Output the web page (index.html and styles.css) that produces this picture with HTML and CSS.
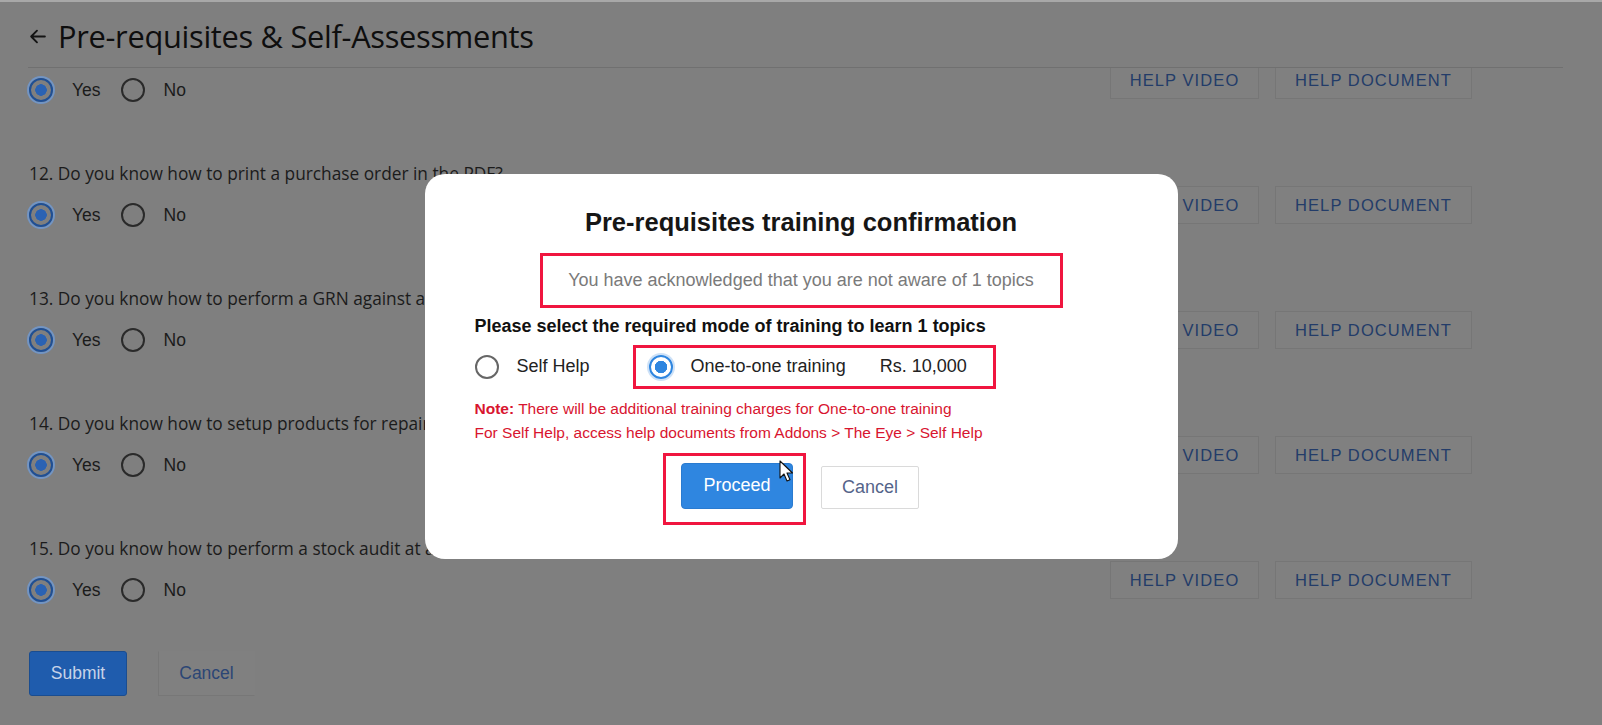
FILE: index.html
```html
<!DOCTYPE html>
<html lang="en">
<head>
  <meta charset="UTF-8">
  <meta name="viewport" content="width=device-width, initial-scale=1.0">
  <title>Pre-requisites &amp; Self-Assessments</title>
  <link rel="stylesheet" href="styles.css">
</head>
<body>
  <div class="page">
    <header class="page-head">
      <svg class="back-icon" viewBox="0 0 18 18" width="19" height="19" aria-hidden="true">
        <path d="M16 9H3M8.5 3.5L3 9l5.5 5.5" fill="none" stroke="#141414" stroke-width="1.8" stroke-linecap="round" stroke-linejoin="round"/>
      </svg>
      <h1>Pre-requisites &amp; Self-Assessments</h1>
    </header>

    <div class="questions">
      <div class="question-list">
        <!-- question 11 is scrolled under the header, only its answers show -->
        <div class="question cut">
          <div class="question-main">
            <div class="choices">
              <label class="choice"><span class="radio on"></span>Yes</label>
              <label class="choice"><span class="radio"></span>No</label>
            </div>
          </div>
          <div class="help-links">
            <span class="help-btn video">HELP VIDEO</span>
            <span class="help-btn doc">HELP DOCUMENT</span>
          </div>
        </div>

        <div class="question">
          <div class="question-main">
            <p class="question-text">12. Do you know how to print a purchase order in the PDF?</p>
            <div class="choices">
              <label class="choice"><span class="radio on"></span>Yes</label>
              <label class="choice"><span class="radio"></span>No</label>
            </div>
          </div>
          <div class="help-links">
            <span class="help-btn video">HELP VIDEO</span>
            <span class="help-btn doc">HELP DOCUMENT</span>
          </div>
        </div>

        <div class="question">
          <div class="question-main">
            <p class="question-text">13. Do you know how to perform a GRN against a purchase order?</p>
            <div class="choices">
              <label class="choice"><span class="radio on"></span>Yes</label>
              <label class="choice"><span class="radio"></span>No</label>
            </div>
          </div>
          <div class="help-links">
            <span class="help-btn video">HELP VIDEO</span>
            <span class="help-btn doc">HELP DOCUMENT</span>
          </div>
        </div>

        <div class="question">
          <div class="question-main">
            <p class="question-text">14. Do you know how to setup products for repair services?</p>
            <div class="choices">
              <label class="choice"><span class="radio on"></span>Yes</label>
              <label class="choice"><span class="radio"></span>No</label>
            </div>
          </div>
          <div class="help-links">
            <span class="help-btn video">HELP VIDEO</span>
            <span class="help-btn doc">HELP DOCUMENT</span>
          </div>
        </div>

        <div class="question">
          <div class="question-main">
            <p class="question-text">15. Do you know how to perform a stock audit at a branch?</p>
            <div class="choices">
              <label class="choice"><span class="radio on"></span>Yes</label>
              <label class="choice"><span class="radio"></span>No</label>
            </div>
          </div>
          <div class="help-links">
            <span class="help-btn video">HELP VIDEO</span>
            <span class="help-btn doc">HELP DOCUMENT</span>
          </div>
        </div>
      </div>
    </div>

    <div class="form-actions">
      <button class="btn-submit">Submit</button>
      <button class="btn-cancel">Cancel</button>
    </div>
  </div>

  <!-- training confirmation dialog -->
  <div class="backdrop">
    <div class="modal">
      <h2 class="modal-title">Pre-requisites training confirmation</h2>
      <div class="ack-box">You have acknowledged that you are not aware of 1 topics</div>
      <p class="mode-label">Please select the required mode of training to learn 1 topics</p>
      <div class="mode-row">
        <label class="mode"><span class="m-radio"></span>Self Help</label>
        <div class="mode-box">
          <label class="mode"><span class="m-radio on"></span>One-to-one training</label>
          <span class="price">Rs. 10,000</span>
        </div>
      </div>
      <div class="notes">
        <p class="note"><b class="note-tag">Note:</b> <span>There will be additional training charges for One-to-one training</span></p>
        <p class="note">For Self Help, access help documents from Addons &gt; The Eye &gt; Self Help</p>
      </div>
      <div class="modal-actions">
        <div class="proceed-box">
          <button class="btn-proceed">Proceed</button>
          <svg class="cursor" viewBox="0 0 14 22" width="14" height="22" aria-hidden="true">
            <path d="M1 1v17l4-4 3 7 3-1.3-3-6.7h5.5z" fill="#fff" stroke="#111" stroke-width="1.1" stroke-linejoin="round"/>
          </svg>
        </div>
        <button class="btn-modal-cancel">Cancel</button>
      </div>
    </div>
  </div>
</body>
</html>
```

FILE: styles.css
```css
html, body {
  margin: 0;
  padding: 0;
  height: 100%;
  overflow: hidden;
}
body {
  background-color: #7f7f7f;
  font-family: "Open Sans", "Liberation Sans", sans-serif;
  color: #1b1b1b;
}
.page {
  height: 100%;
  border-top: 2px solid #a8a8a8;
  box-sizing: border-box;
}

/* header */
.page-head {
  display: flex;
  align-items: center;
  gap: 11px;
  height: 34px;
  padding: 17px 0 14px 0;
  margin: 0 39px 0 28px;
  border-bottom: 1px solid #707070;
}
.page-head h1 {
  margin: 0;
  font-size: 30.8px;
  font-weight: 500;
  color: #0e0e0e;
  letter-spacing: -0.3px;
}

/* question rows */
.questions {
  overflow: hidden;
  height: 583px;
}
.question-list {
  margin-top: -31px;
  display: flex;
  flex-direction: column;
  gap: 11px;
}
.question {
  display: flex;
  justify-content: space-between;
  padding: 0 130px 49px 29px;
}
.question.cut .choices {
  margin-top: 41px;
}
.question-text {
  margin: 0;
  font-size: 17.3px;
  line-height: 24px;
  color: #1b1b1b;
}
.choices {
  display: flex;
  margin-top: 17px;
  height: 24px;
  font-family: "Liberation Sans", Arial, sans-serif;
  font-size: 17.5px;
}
.choice {
  display: inline-flex;
  align-items: center;
  gap: 19px;
  margin-right: 20px;
}
.radio {
  width: 24px;
  height: 24px;
  border: 2px solid #2a2a2a;
  border-radius: 50%;
  box-sizing: border-box;
}
.radio.on {
  border-color: #1f4f94;
  background: radial-gradient(circle, #2a62b3 0 5.5px, #7f7f7f 6px);
  box-shadow: 0 0 0 2px #7395c3;
}
.help-links {
  display: flex;
  gap: 16px;
  margin-top: 24px;
  height: 38px;
}
.help-btn {
  display: flex;
  align-items: center;
  justify-content: center;
  height: 38px;
  box-sizing: border-box;
  border: 1px solid #767676;
  background-color: #808080;
  font-family: "Liberation Sans", Arial, sans-serif;
  font-size: 16.5px;
  letter-spacing: 1.1px;
  color: #233c69;
}
.help-btn.video {
  width: 149px;
}
.help-btn.doc {
  width: 197px;
}

/* submit / cancel */
.form-actions {
  display: flex;
  gap: 31px;
  padding-left: 29px;
}
.btn-submit,
.btn-cancel {
  height: 45px;
  font-family: "Liberation Sans", Arial, sans-serif;
  font-size: 17.5px;
  cursor: pointer;
}
.btn-submit {
  width: 98px;
  background-color: #1f5cad;
  border: 1px solid #1a4d90;
  border-radius: 3px;
  color: #c7d3e8;
}
.btn-cancel {
  width: 97px;
  background-color: #808080;
  border: 1px solid #777;
  border-top-color: #808080;
  border-right-color: #808080;
  color: #2c4675;
}

/* modal */
.backdrop {
  position: fixed;
  inset: 0;
  display: flex;
  align-items: center;
  justify-content: center;
  padding-top: 7px;
  box-sizing: border-box;
}
.modal {
  width: 753px;
  box-sizing: border-box;
  padding: 34px 50px 34px 50px;
  background: white;
  border-radius: 20px;
  font-family: "Liberation Sans", Arial, sans-serif;
}
.modal-title {
  margin: 0;
  text-align: center;
  font-size: 25.5px;
  line-height: 28px;
  font-weight: 700;
  color: #161616;
}
.ack-box {
  width: 523px;
  height: 55px;
  box-sizing: border-box;
  margin: 17px auto 0 auto;
  border: 3px solid #f0163f;
  display: flex;
  align-items: center;
  justify-content: center;
  font-size: 18px;
  color: #7a7a7a;
}
.mode-label {
  margin: 7px 0 0 0;
  font-size: 18px;
  line-height: 22px;
  font-weight: 700;
  color: #111;
}
.mode-row {
  display: flex;
  align-items: center;
  margin-top: 8px;
}
.mode {
  display: inline-flex;
  align-items: center;
  gap: 18px;
  font-size: 18px;
  color: #222;
}
.m-radio {
  width: 24px;
  height: 24px;
  border: 2px solid #666;
  border-radius: 50%;
  box-sizing: border-box;
}
.m-radio.on {
  border-color: #2f86e0;
  background: radial-gradient(circle, #2f86e0 0 6px, white 6.5px);
  box-shadow: 0 0 0 2px #cde1f7;
}
.mode-box {
  display: flex;
  align-items: center;
  margin-left: 43px;
  padding: 7px 26px 7px 13px;
  border: 3px solid #f0163f;
}
.price {
  margin-left: 34px;
  font-size: 18px;
  color: #222;
}
.notes {
  margin-top: 8px;
}
.note {
  margin: 0;
  font-size: 15.5px;
  line-height: 24px;
  color: #d8152f;
}
.note-tag {
  font-weight: 700;
}
.modal-actions {
  display: flex;
  align-items: flex-end;
  justify-content: center;
  gap: 15px;
  margin-top: 8px;
  padding-right: 20px;
}
.proceed-box {
  position: relative;
  padding: 7px 10px 13px 15px;
  border: 3px solid #f0163f;
}
.btn-proceed {
  display: block;
  width: 112px;
  height: 46px;
  background-color: #2f86e0;
  border: 1px solid #2a7bd0;
  border-radius: 4px;
  color: white;
  font-family: "Liberation Sans", Arial, sans-serif;
  font-size: 18px;
  cursor: pointer;
}
.btn-modal-cancel {
  width: 98px;
  height: 43px;
  margin-bottom: 16px;
  background: white;
  border: 1px solid #dadada;
  border-radius: 2px;
  color: #55648a;
  font-family: "Liberation Sans", Arial, sans-serif;
  font-size: 18px;
  cursor: pointer;
}
.cursor {
  position: absolute;
  left: 113px;
  top: 4px;
}
```
